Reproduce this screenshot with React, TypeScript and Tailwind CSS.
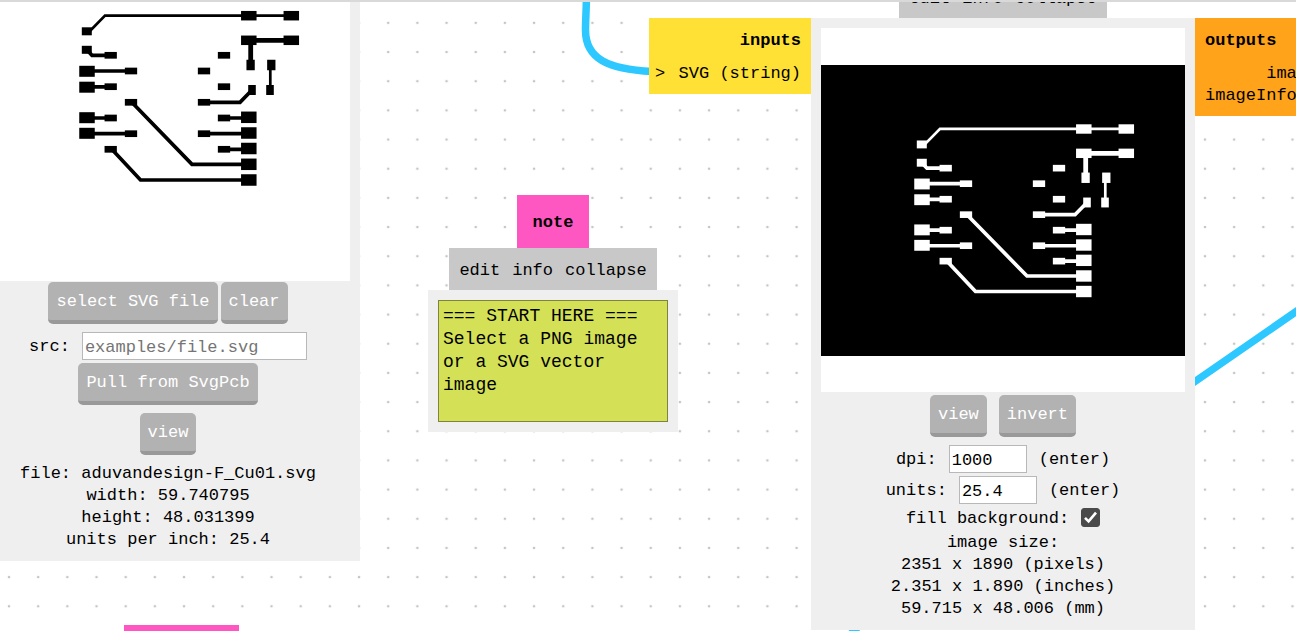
import { useId, useState } from "react";
import type { ReactNode } from "react";
import { clsx } from "clsx";

type Pad = [cx: number, cy: number, w: number, h: number];

const PADS: Pad[] = [
  // headers on the right
  [248.8, 15.7, 15.5, 9.5],
  [291.3, 15.7, 15.5, 9.5],
  [248.8, 40.3, 15.5, 9.5],
  [291.3, 40.3, 15.5, 9.5],
  [248.8, 117.3, 15.5, 11.5],
  [248.8, 133, 15.5, 11.5],
  [248.8, 148.5, 15.5, 11.5],
  [248.8, 164.3, 15.5, 11.5],
  [248.8, 180, 15.5, 11.5],
  // headers on the left
  [86.8, 31.3, 10, 8],
  [86.8, 49.8, 10, 8],
  [87, 71.3, 15.5, 11],
  [87, 87.2, 15.5, 11],
  [87, 117.7, 15.5, 11],
  [87, 133.3, 15.5, 11],
  // chip legs
  [110.7, 55.3, 12.3, 6.7],
  [131, 71, 12.3, 6.7],
  [110.7, 86.7, 12.3, 6.7],
  [131, 102.3, 12.3, 6.7],
  [110.7, 118, 12.3, 6.7],
  [131, 133.7, 12.3, 6.7],
  [110.7, 149.3, 12.3, 6.7],
  [224, 55.3, 12.3, 6.7],
  [204, 71, 12.3, 6.7],
  [224, 86.7, 12.3, 6.7],
  [204, 102.3, 12.3, 6.7],
  [224, 118, 12.3, 6.7],
  [204, 133.7, 12.3, 6.7],
  [224, 149.3, 12.3, 6.7],
  // led and resistor
  [250.6, 65, 8.3, 10.5],
  [271.3, 65, 8.3, 10.5],
  [252, 90, 7.6, 10],
  [270, 90, 7.6, 10],
];

const TRACES = [
  { width: 2.7, d: "M88 33L105 15.6H291M270.3 65V90" },
  { width: 4.8, d: "M249 40.3H291M250.7 40.3V65" },
  {
    width: 3.7,
    d: "M87 50L92 55.3H111M87 71H131M87 86.9H111M87 118H111M87 133.7H131M133 103.5L192 164.3H249M113 150.5L140.5 180H249M204 102.3H240L252 90M224 118H249M204 133.7H249M224 149.3H249",
  },
];

function Board({ viewBox, className }: { viewBox: string; className?: string }) {
  return (
    <svg viewBox={viewBox} preserveAspectRatio="none" className={clsx("block w-full", className)} aria-hidden="true">
      {TRACES.map((trace) => (
        <path key={trace.width} d={trace.d} fill="none" stroke="currentColor" strokeWidth={trace.width} />
      ))}
      {PADS.map(([cx, cy, w, h]) => (
        <rect key={`${cx}-${cy}`} x={cx - w / 2} y={cy - h / 2} width={w} height={h} fill="currentColor" />
      ))}
    </svg>
  );
}

function ModuleButton({ children, onClick }: { children: ReactNode; onClick?: () => void }) {
  return (
    <button
      type="button"
      onClick={onClick}
      className="h-[42px] cursor-pointer rounded-[5px] border-b-4 border-[#999] bg-[#b2b2b2] px-2 pt-0.5 text-white"
    >
      {children}
    </button>
  );
}

function ModuleMenu({ className }: { className?: string }) {
  return (
    <div className={clsx("flex h-[42px] items-center gap-3 bg-[#c8c8c8] px-2.5 pt-1", className)}>
      <button type="button">edit</button>
      <button type="button">info</button>
      <button type="button">collapse</button>
    </div>
  );
}

interface FieldProps {
  label: string;
  value: string;
  onChange: (value: string) => void;
  placeholder?: string;
  hint?: string;
  wide?: boolean;
}

function Field({ label, value, onChange, placeholder, hint, wide }: FieldProps) {
  const id = useId();

  return (
    <div className="flex items-center justify-center gap-3">
      <label htmlFor={id} className="pt-0.5">
        {label}
      </label>
      <input
        id={id}
        type="text"
        value={value}
        placeholder={placeholder}
        onChange={(e) => onChange(e.target.value)}
        className={clsx(
          "h-7 border border-[#b8b8b8] bg-white px-0.5 pt-0.5 outline-none placeholder:text-[#757575]",
          wide ? "w-[225px]" : "w-[78px]"
        )}
      />
      {hint && <span className="pt-0.5">{hint}</span>}
    </div>
  );
}

function Canvas() {
  return (
    <svg className="absolute inset-0 h-full w-full" aria-hidden="true">
      <defs>
        <pattern id="dots" x="-5.6" y="-6.3" width="29.17" height="29.17" patternUnits="userSpaceOnUse">
          <circle cx="14.6" cy="0" r="1.3" fill="#c4c4c4" />
          <circle cx="14.6" cy="29.17" r="1.3" fill="#c4c4c4" />
        </pattern>
      </defs>
      <rect width="100%" height="100%" fill="url(#dots)" />
      <g fill="none" stroke="#2cc8ff" strokeWidth="7.5">
        <path d="M586.5 -10C586.5 10 585.5 18 585.5 30C585.5 59 608 69 652 71.5" />
        <path d="M1310 302L1195 381.5C1050 482 880 600 846 639" />
      </g>
    </svg>
  );
}

function ReadSvg() {
  const [src, setSrc] = useState("");

  return (
    <section className="absolute -top-[93px] -left-6 w-96 bg-[#efefef] p-2.5 text-center">
      <div className="aspect-square bg-white text-black">
        <Board viewBox="-14 -83 364 364" className="h-full" />
      </div>
      <div className="mt-px flex justify-center gap-[3px]">
        <ModuleButton>select SVG file</ModuleButton>
        <ModuleButton onClick={() => setSrc("")}>clear</ModuleButton>
      </div>
      <div className="mt-2">
        <Field label="src:" value={src} onChange={setSrc} placeholder="examples/file.svg" wide />
      </div>
      <div className="mt-[3px] flex flex-col items-center gap-2">
        <ModuleButton>Pull from SvgPcb</ModuleButton>
        <ModuleButton>view</ModuleButton>
      </div>
      <div className="mt-2">
        <p>file: aduvandesign-F_Cu01.svg</p>
        <p>width: 59.740795</p>
        <p>height: 48.031399</p>
        <p>units per inch: 25.4</p>
      </div>
    </section>
  );
}

function Note() {
  const [text, setText] = useState("=== START HERE ===\nSelect a PNG image or a SVG vector image");

  return (
    <section className="absolute top-[195px] left-[428px] flex flex-col items-center">
      <h2 className="flex h-[53px] items-center bg-[#ff57c1] px-4 pt-0.5 font-bold">note</h2>
      <ModuleMenu />
      <div className="bg-[#efefef] p-2.5">
        <textarea
          aria-label="note"
          value={text}
          onChange={(e) => setText(e.target.value)}
          className="block h-[122px] w-[230px] resize-none border border-[#7d8340] bg-[#d4e157] p-1 text-[18px] leading-[23px] outline-none"
        />
      </div>
    </section>
  );
}

function ConvertSvg() {
  const [dpi, setDpi] = useState("1000");
  const [units, setUnits] = useState("25.4");
  const [fill, setFill] = useState(true);

  return (
    <section className="absolute -top-6 left-[649px] grid grid-cols-[162px_384px_auto] items-start">
      <ModuleMenu className="col-start-2 justify-self-center" />

      <div className="col-start-1 row-start-2 bg-[#ffe135] pt-3 pr-2.5 pb-[9px] pl-1.5">
        <h3 className="mb-[11px] text-right font-bold">inputs</h3>
        <p className="flex justify-between">
          <span>&gt;</span>
          <span>SVG (string)</span>
        </p>
      </div>

      <div className="col-start-2 row-start-2 bg-[#efefef] p-2.5 text-center">
        <div className="flex aspect-square items-center bg-white">
          <div className="w-full bg-black text-white">
            <Board viewBox="-14 -49 364 294.2" className="h-[291px]" />
          </div>
        </div>
        <div className="mt-[3px] flex justify-center gap-3">
          <ModuleButton>view</ModuleButton>
          <ModuleButton>invert</ModuleButton>
        </div>
        <div className="mt-2 flex flex-col gap-[3px]">
          <Field label="dpi:" value={dpi} onChange={setDpi} hint="(enter)" />
          <Field label="units:" value={units} onChange={setUnits} hint="(enter)" />
        </div>
        <label className="mt-1 flex items-start justify-center gap-3">
          fill background:
          <span className="relative size-[19px]">
            <input
              type="checkbox"
              checked={fill}
              onChange={(e) => setFill(e.target.checked)}
              className="block size-full appearance-none rounded-[3px] border border-[#4a4a4a] bg-white checked:bg-[#4a4a4a]"
            />
            {fill && (
              <svg viewBox="0 0 19 19" className="pointer-events-none absolute inset-0" aria-hidden="true">
                <path d="M4 9.8L7.6 13.4L15 4.6" fill="none" stroke="#fff" strokeWidth="2.6" />
              </svg>
            )}
          </span>
        </label>
        <div className="mt-0.5">
          <p>image size:</p>
          <p>2351 x 1890 (pixels)</p>
          <p>2.351 x 1.890 (inches)</p>
          <p>59.715 x 48.006 (mm)</p>
        </div>
      </div>

      <div className="col-start-3 row-start-2 bg-[#ffa31a] px-2.5 pt-3 pb-[9px] whitespace-nowrap">
        <h3 className="mb-[11px] font-bold">outputs</h3>
        <div className="text-right">
          <p>image (RGBA)</p>
          <p>imageInfo (object)</p>
        </div>
      </div>
    </section>
  );
}

export default function App() {
  return (
    <main className="relative h-screen overflow-hidden bg-white font-[Consolas,'Liberation_Mono',monospace] text-[17px] leading-[22px] text-black">
      <Canvas />
      <ReadSvg />
      <Note />
      <ConvertSvg />
      {/* title tab of the module below the fold */}
      <div className="absolute top-[625px] left-[124px] h-[53px] w-[115px] bg-[#ff57c1]" />
      {/* lower edge of the toolbar */}
      <div className="absolute inset-x-0 top-0 h-0.5 bg-[#d9d9d9]" />
    </main>
  );
}
